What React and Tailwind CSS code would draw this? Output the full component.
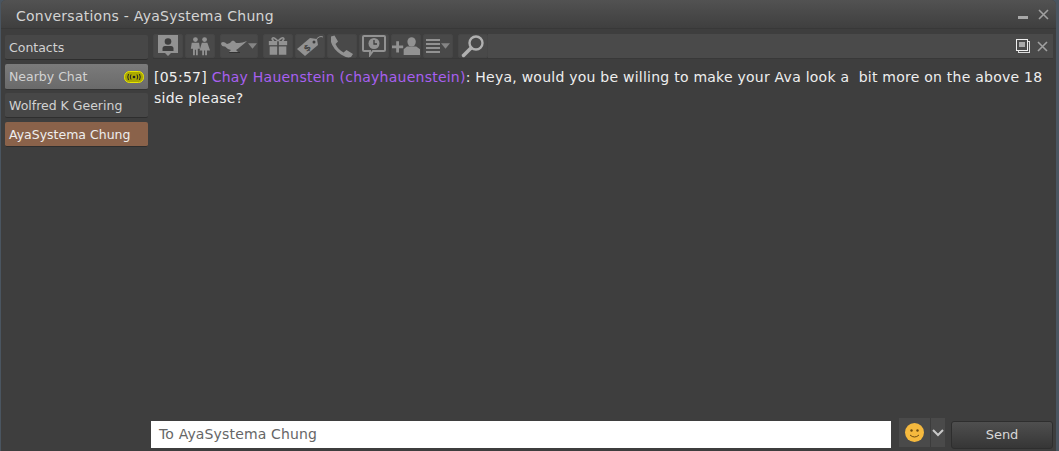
const c = "#929292";
const Btn = ({ w = 30, children }) => (
  <div className="h-[24px] bg-[#494949] border border-[#464646] rounded-[2px] flex items-center justify-center shrink-0" style={{ width: w }}>{children}</div>
);
const Arrow = () => (
  <svg width="9" height="6" viewBox="0 0 10 6"><path d="M0 0H10L5 6Z" fill="#858585" /></svg>
);
const Profile = () => (
  <svg width="20" height="22" viewBox="0 0 20 22"><path d="M0 0H20V18H13L10 21L7 18H0Z" fill={c} /><circle cx="10" cy="6.5" r="3.3" fill="#3e3e3e" /><path d="M4.5 16V13.5Q4.5 11 7 11H13Q15.5 11 15.5 13.5V16Z" fill="#3e3e3e" /></svg>
);
const Couple = () => (
  <svg width="22" height="20" viewBox="0 0 24 20" fill={c}><circle cx="7" cy="3" r="2.6" /><path d="M3 6.5H11L12 13H9.6V20H7.6V14H6.4V20H4.4V13H2Z" /><circle cx="17" cy="3" r="2.6" /><path d="M14 6.5H20L23 15H19.6V20H17.6V15H16.4V20H14.4V15H11.5Z" /></svg>
);
const Lamp = () => (
  <svg width="26" height="14" viewBox="0 0 26 14"><path d="M0 5Q0 3 2 3Q4 3 6 5L9 4Q10 2 12 1.5Q14 2 15 4H18Q21 4 26 2Q23 5 19 8Q17 10 15 11L17 13H8L10 11Q6 10 4 7.5Q1 8 0 5Z" fill={c} /><path d="M8 13.5H19" stroke="#333" /></svg>
);
const Gift = () => (
  <svg width="20" height="20" viewBox="0 0 24 22" fill={c}><path d="M12 5Q7 0 5.5 1.5T7 5M12 5Q17 0 18.5 1.5T17 5" fill="none" stroke={c} strokeWidth="2" /><rect x="1" y="5" width="10" height="5" /><rect x="13" y="5" width="10" height="5" /><rect x="2" y="11.5" width="9" height="10" /><rect x="13" y="11.5" width="9" height="10" /></svg>
);
const Tag = () => (
  <svg width="26" height="22" viewBox="0 0 26 22"><path d="M0 14L13 3L20 4L21 10L8 21Z" fill={c} /><circle cx="17" cy="7" r="1.5" fill="#3e3e3e" /><path d="M18 6Q22 0 26 2" fill="none" stroke={c} /><text x="7" y="16" fontFamily="DejaVu Sans" fontSize="9" fontWeight="700" fill="#444" transform="rotate(-40 10 13)">$</text></svg>
);
const Phone = () => (
  <svg width="24" height="23" viewBox="0 0 24 23"><path d="M1 1.5L4.5 0.5L8 6.5L5.5 9Q8 14.5 13.5 17.5L16.5 15L23 19L21 22Q17 23.5 11 19.5Q3 14 1 7Z" fill={c} /></svg>
);
const History = () => (
  <svg width="24" height="22" viewBox="0 0 24 22"><path d="M2 1H22Q23 1 23 2V15Q23 16 22 16H11L8 20V16H2Q1 16 1 15V2Q1 1 2 1Z" fill="none" stroke={c} strokeWidth="2" /><circle cx="12" cy="8.5" r="5.5" fill={c} /><path d="M12 5V9H15" stroke="#3e3e3e" strokeWidth="1.3" fill="none" /></svg>
);
const AddPerson = () => (
  <svg width="28" height="19" viewBox="0 0 30 20" fill={c}><path d="M0 9H4.5V4.5H7.5V9H12V12H7.5V16.5H4.5V12H0Z" /><ellipse cx="21" cy="5" rx="4.5" ry="5" /><path d="M16 10H26L30 13V19H12.5V13Z" /></svg>
);
const Menu = () => (
  <svg width="14" height="14" viewBox="0 0 14 14" fill={c}><rect y="0" width="14" height="2" /><rect y="4" width="14" height="2" /><rect y="8" width="14" height="2" /><rect y="12" width="14" height="2" /></svg>
);
const Search = () => (
  <svg width="24" height="24" viewBox="0 0 24 24"><circle cx="15" cy="9" r="6.5" fill="none" stroke="#b0b0b0" strokeWidth="2.4" /><path d="M10 14L2.5 21.5" stroke="#b0b0b0" strokeWidth="3.5" strokeLinecap="round" /></svg>
);
const X = ({ s = 11 }) => (
  <svg width={s} height={s} viewBox="0 0 11 11"><path d="M1 1L10 10M10 1L1 10" stroke="#a0a0a0" strokeWidth="1.6" /></svg>
);
const Tab = ({ children, cls = "", h = "h-[25px]" }) => (
  <div className={`${h} flex items-center pl-[4px] pt-[2px] text-[12.5px] rounded-[2px] border-b border-[#2e2e2e] ${cls}`}>{children}</div>
);

export default function App() {
  return (
    <div className="w-[1059px] h-[451px] overflow-hidden bg-[#4a5560] pr-[3px] pl-[1px] font-['DejaVu_Sans',sans-serif]">
      <div className="h-full flex flex-col bg-[#3e3e3e] rounded-t-[5px]">
        <div className="h-[29px] shrink-0 pl-[15px] pr-[7px] pt-[4px] flex items-center justify-between bg-gradient-to-b from-[#525252] to-[#3f3f3f] border-b border-[#383838] rounded-t-[5px]">
          <span className="text-[14px] tracking-[0.25px] text-[#d4d4d4]">Conversations - AyaSystema Chung</span>
          <div className="flex items-center gap-[10px] -mt-[3px]">
            <div className="w-[10px] h-[3px] mt-[5px] bg-[#a8a8a8]" />
            <X />
          </div>
        </div>
        <div className="flex-1 flex min-h-0">
          <div className="w-[147px] shrink-0 pl-[4px] pt-[6px] flex flex-col gap-[4px] text-[#d2d2d2]">
            <Tab cls="bg-[#474747]">Contacts</Tab>
            <Tab h="h-[26px]" cls="bg-gradient-to-b from-[#7b7b7b] to-[#6a6a6a] justify-between pr-[4px] border-[#333]">
              <span>Nearby Chat</span>
              <svg width="20" height="12" viewBox="0 0 20 12" className="-mt-[2px]"><rect x="0.5" y="0.5" width="19" height="11" rx="5" fill="#aaa800" stroke="#e8e600" /><circle cx="10" cy="6" r="1.3" fill="#222" /><path d="M7 3.5Q5.5 6 7 8.5M13 3.5Q14.5 6 13 8.5M4.5 3Q3 6 4.5 9M15.5 3Q17 6 15.5 9" stroke="#222" fill="none" /></svg>
            </Tab>
            <Tab cls="bg-[#474747] -mt-[1px]">Wolfred K Geering</Tab>
            <Tab cls="bg-[#8a624a] text-[#eeeeee]">AyaSystema Chung</Tab>
          </div>
          <div className="flex-1 min-w-0 pl-[5px] pr-[3px] flex flex-col">
            <div className="h-[25px] mt-[5px] shrink-0 flex items-center bg-[#4a4a4a] border-b border-[#383838] pr-[5px]">
              <div className="flex items-center gap-[2px] h-full bg-[#3e3e3e] pr-0">
                <Btn><Profile /></Btn>
                <Btn><Couple /></Btn>
                <div className="w-[1px]" />
                <Btn w={38}><div className="flex items-center gap-[1px]"><Lamp /><Arrow /></div></Btn>
                <div className="w-[1px]" />
                <Btn><Gift /></Btn>
                <Btn><Tag /></Btn>
                <Btn><Phone /></Btn>
                <Btn><History /></Btn>
                <Btn><AddPerson /></Btn>
                <Btn><div className="flex items-center gap-[1px]"><Menu /><Arrow /></div></Btn>
                <div className="w-[1px]" />
                <Btn><Search /></Btn>
              </div>
              <div className="ml-auto flex items-center gap-[7px]">
                <svg width="14" height="14" viewBox="0 0 14 14"><rect x="2.5" y="2.5" width="11" height="11" fill="none" stroke="#ddd" /><rect x="0.5" y="0.5" width="11" height="11" fill="#4a4a4a" stroke="#eee" /><rect x="3" y="3" width="6" height="5" fill="#aaa" /></svg>
                <X />
              </div>
            </div>
            <div className="flex-1 pl-[1px] pt-[8px] text-[14px] tracking-[0.24px] leading-[21px] text-[#eeeeee] min-h-0">
              <div className="w-[895px]">[05:57] <span className="text-[#a860f0]">Chay Hauenstein (chayhauenstein)</span>: Heya, would you be willing to make your Ava look a&nbsp; bit more on the above 18 side please?</div>
            </div>
            <div className="h-[29px] shrink-0 mb-[2px] flex items-start -ml-[2px]">
              <div className="w-[740px] h-[27px] mt-[1px] bg-white flex items-center pl-[8px] text-[14px] tracking-[0.15px] text-[#666]">To AyaSystema Chung</div>
              <div className="ml-[8px] w-[46px] h-[29px] -mt-[2px] bg-[#4a4a4a] flex shrink-0">
                <div className="w-[32px] flex items-center justify-center border-r border-[#3c3c3c]">
                  <svg width="19" height="19" viewBox="0 0 19 19"><circle cx="9.5" cy="9.5" r="9.5" fill="#f5b93e" /><circle cx="6.5" cy="7.5" r="1.2" fill="#6b4a10" /><circle cx="12.5" cy="7.5" r="1.2" fill="#6b4a10" /><path d="M5 12Q9.5 16 14 12" stroke="#6b4a10" fill="none" /></svg>
                </div>
                <div className="flex-1 flex items-center justify-center">
                  <svg width="12" height="8" viewBox="0 0 12 8"><path d="M1 1L6 6L11 1" stroke="#c8c8c8" strokeWidth="2" fill="none" /></svg>
                </div>
              </div>
              <div className="ml-[6px] w-[102px] h-[28px] mt-[1px] bg-gradient-to-b from-[#4f4f4f] to-[#363636] border border-[#2e2e2e] rounded-[3px] flex items-center justify-center text-[13px] text-[#d8d8d8] shrink-0">Send</div>
            </div>
          </div>
        </div>
      </div>
    </div>
  );
}
